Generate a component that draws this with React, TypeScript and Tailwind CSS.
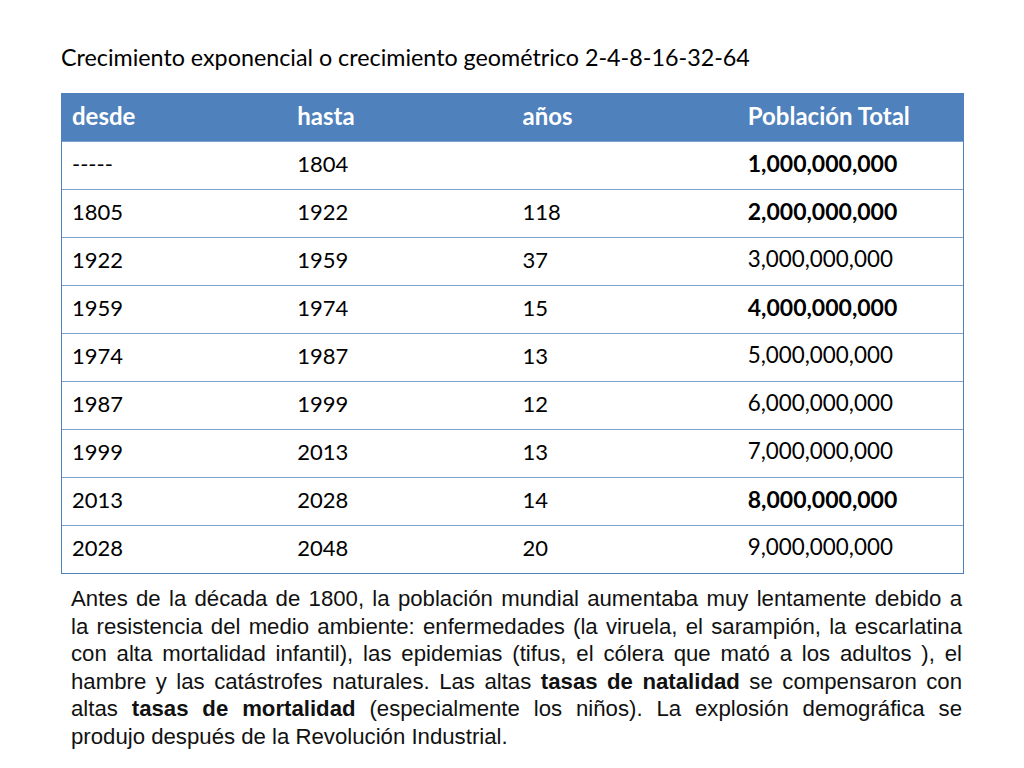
import React from 'react';

type Row = { desde: string; hasta: string; anos: string; total: string; bold?: boolean };

const rows: Row[] = [
  { desde: '-----', hasta: '1804', anos: '', total: '1,000,000,000', bold: true },
  { desde: '1805', hasta: '1922', anos: '118', total: '2,000,000,000', bold: true },
  { desde: '1922', hasta: '1959', anos: '37', total: '3,000,000,000' },
  { desde: '1959', hasta: '1974', anos: '15', total: '4,000,000,000', bold: true },
  { desde: '1974', hasta: '1987', anos: '13', total: '5,000,000,000' },
  { desde: '1987', hasta: '1999', anos: '12', total: '6,000,000,000' },
  { desde: '1999', hasta: '2013', anos: '13', total: '7,000,000,000' },
  { desde: '2013', hasta: '2028', anos: '14', total: '8,000,000,000', bold: true },
  { desde: '2028', hasta: '2048', anos: '20', total: '9,000,000,000' },
];

const calibri = { fontFamily: 'Lato, "Open Sans", sans-serif' };

// each line is justified on its own so the breaks follow the slide
const Line = ({ children }: { children: React.ReactNode }) => (
  <div className="text-justify [text-align-last:justify] whitespace-nowrap">{children}</div>
);

export default function App() {
  return (
    <div className="w-[1024px] h-[768px] bg-white overflow-hidden flex flex-col">
      {/* Title */}
      <div className="pl-[61px] pt-[42px] h-[93px] text-[23.3px] leading-[30px] text-black" style={calibri}>
        Crecimiento exponencial o crecimiento geométrico 2-4-8-16-32-64
      </div>

      {/* Table */}
      <div className="ml-[61px] w-[903px] border border-[#4f81bd]" style={calibri}>
        <div className="grid grid-cols-4 h-[47px] pb-[4px] bg-[#4f81bd] items-center text-white font-bold text-[24px]">
          <div className="pl-[10px]">desde</div>
          <div className="pl-[10px]">hasta</div>
          <div className="pl-[10px]">años</div>
          <div className="pl-[10px]">Población Total</div>
        </div>
        {rows.map((r, i) => (
          <div
            key={i}
            className="grid grid-cols-4 h-[48px] pb-[5px] items-center text-black text-[22px] border-t border-[#7fa1cf]"
          >
            <div className="pl-[10px]">{r.desde}</div>
            <div className="pl-[10px]">{r.hasta}</div>
            <div className="pl-[10px]">{r.anos}</div>
            <div className={r.bold ? 'pl-[10px] font-bold text-[23px]' : 'pl-[10px] text-[22.4px]'}>{r.total}</div>
          </div>
        ))}
      </div>

      {/* Paragraph */}
      <div
        className="ml-[71px] w-[891px] mt-[11px] text-[22.2px] leading-[27.6px] text-[#111]"
        style={{ fontFamily: '"Liberation Sans", Arial, sans-serif' }}
      >
        <Line>Antes de la década de 1800, la población mundial aumentaba muy lentamente debido a</Line>
        <Line>la resistencia del medio ambiente: enfermedades (la viruela, el sarampión, la escarlatina</Line>
        <Line>con alta mortalidad infantil), las epidemias (tifus, el cólera que mató a los adultos ), el</Line>
        <Line>
          hambre y las catástrofes naturales. Las altas <b>tasas de natalidad</b> se compensaron con
        </Line>
        <Line>
          altas <b>tasas de mortalidad</b> (especialmente los niños). La explosión demográfica se
        </Line>
        <div>produjo después de la Revolución Industrial.</div>
      </div>
    </div>
  );
}
